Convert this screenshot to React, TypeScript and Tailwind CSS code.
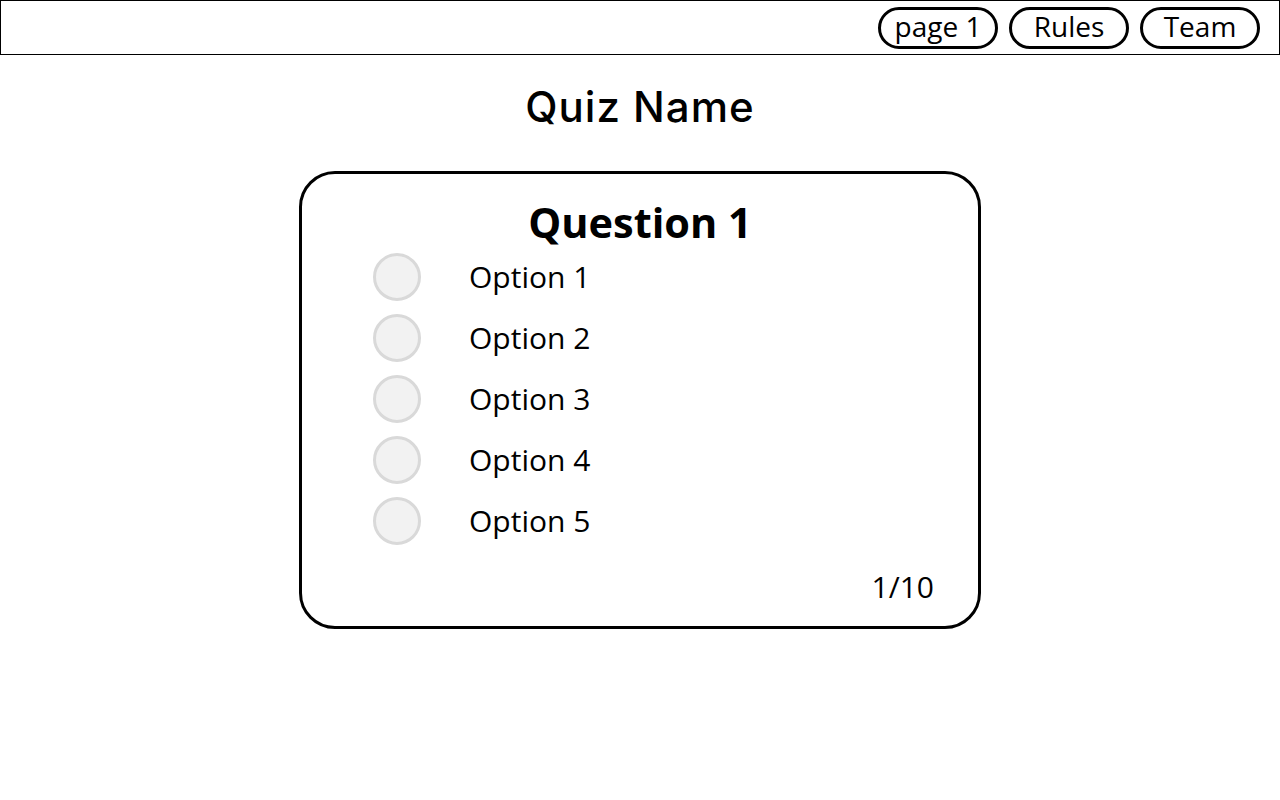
import React from "react";

const navItems = ["page 1", "Rules", "Team"];
const options = ["Option 1", "Option 2", "Option 3", "Option 4", "Option 5"];

export default function App() {
  return (
    <div className="min-h-screen bg-white text-black font-['Open_Sans',sans-serif]">
      {/* Top bar */}
      <header className="h-[55px] border border-black flex items-center justify-end gap-[11px] pr-[19px]">
        {navItems.map((item) => (
          <button
            key={item}
            className="w-[120px] h-[42px] rounded-full border-[3px] border-black flex items-center justify-center text-[28px] leading-none pb-[3px]"
          >
            {item}
          </button>
        ))}
      </header>

      <h1 className="mt-[28px] text-center text-[42px] leading-[48px] font-medium font-['Inter',sans-serif] tracking-[1px]">
        Quiz Name
      </h1>

      {/* Question card */}
      <div className="mx-auto mt-[40px] w-[682px] h-[458px] rounded-[36px] border-[3px] border-black flex flex-col">
        <h2 className="pt-[24px] text-center text-[41.5px] leading-[48px] font-bold">Question 1</h2>
        <div className="flex flex-col pl-[71px]">
          {options.map((opt) => (
            <label key={opt} className="h-[61px] flex items-center gap-[48px] cursor-pointer">
              <span className="w-[48px] h-[48px] rounded-full border-[3px] border-[#d9d9d9] bg-[#f2f2f2] shrink-0" />
              <span className="text-[30px] leading-none">{opt}</span>
            </label>
          ))}
        </div>
        <div className="mt-[18px] pr-[44px] text-right text-[30px] leading-[36px]">1/10</div>
      </div>
    </div>
  );
}
